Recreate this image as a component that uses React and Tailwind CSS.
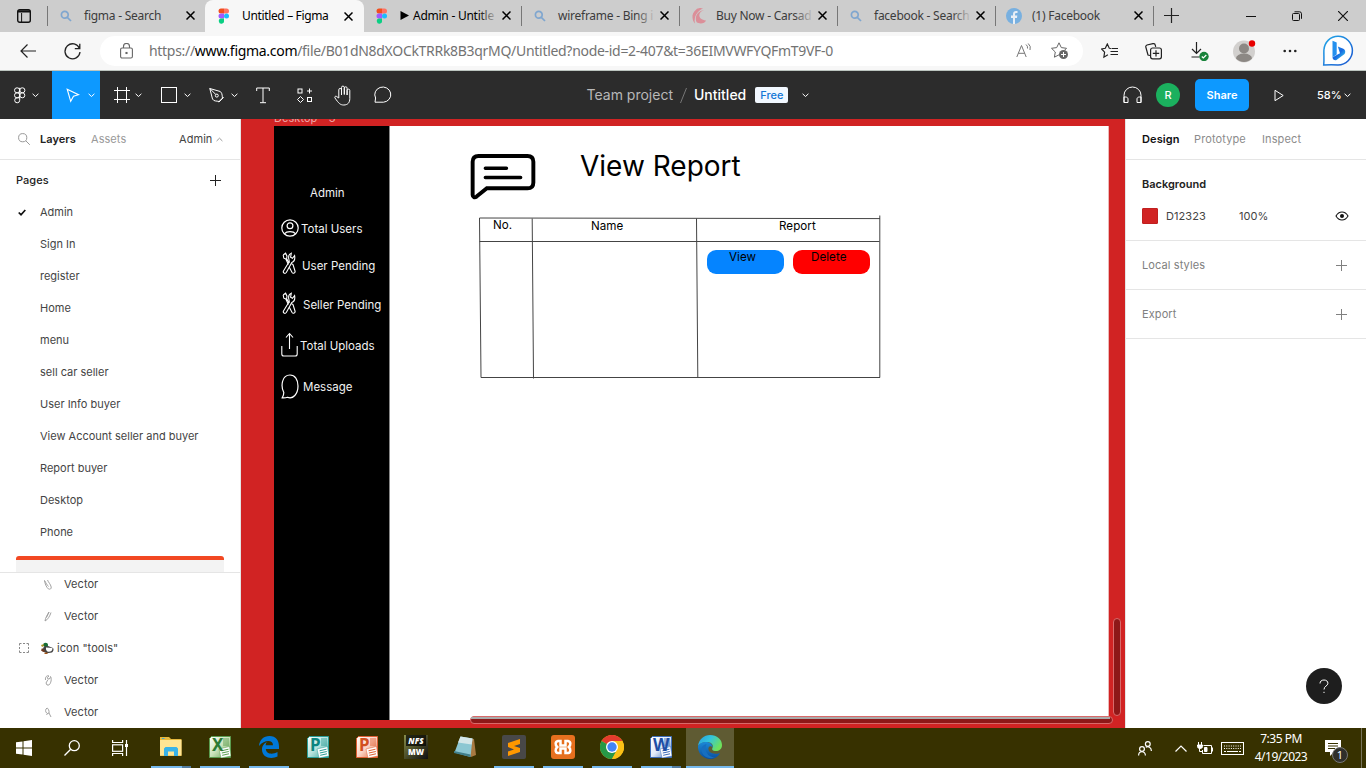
import React from "react";

const Svg = ({ w, h, vb, className = "", children, sw = 1, stroke = "currentColor", fill = "none" }) => (
  <svg width={w} height={h} viewBox={vb || `0 0 ${w} ${h}`} fill={fill} stroke={stroke} strokeWidth={sw} className={"block shrink-0 " + className}>
    {children}
  </svg>
);

const Close = () => (
  <Svg w={9} h={9} sw={1.5} className="text-black"><path d="M.5 .5l8 8M8.500 .5l-8 8" /></Svg>
);
const Magnifier = () => (
  <Svg w={12} h={12} sw={1.7} stroke="#7fa6cf"><circle cx="4.800" cy="4.800" r="3.400" /><path d="M7.300 7.300l3.700 3.700" /></Svg>
);
const FigmaLogo = () => (
  <Svg w={12} h={16} vb="0.500 0 11 16" stroke="none">
    <path d="M3 .5h3v5H3a2.500 2.500 0 010-5z" fill="#f24e1e" />
    <path d="M6 .5h2.500a2.500 2.500 0 010 5H6z" fill="#ff7262" />
    <path d="M3 5.500h3v5H3a2.500 2.500 0 010-5z" fill="#a259ff" />
    <circle cx="8.500" cy="8" r="2.500" fill="#1abcfe" />
    <path d="M3 10.500h3v2.300a2.600 2.600 0 11-3-2.300z" fill="#0acf83" />
  </Svg>
);
const Crescent = () => (
  <Svg w={15} h={16} stroke="none" fill="#db8f99"><path d="M11 .5A7.500 7.500 0 002.500 12C1.500 7 4 1.500 11 .5z" /><path d="M11 .5C5 .5 0 4 .5 9.500c.3 3 1 4.500 2.500 6C1.500 9 5 3 11 .5z" /><path d="M12 2C5 4.500 6 12 14 12.500c-1 3-6.500 4-9.500 1.500C2.500 9 5 3.500 12 2z" /></Svg>
);
const Facebook = () => (
  <Svg w={16} h={16} stroke="none"><circle cx="8" cy="8" r="8" fill="#78b0e0" /><path d="M7 16v-6H5V7.500h2V6c0-2 1.200-3 3-3l1.500.1v2h-1C9.400 5.100 9 5.500 9 6.300v1.200h2.300L11 10H9v6z" fill="#e8eef5" /></Svg>
);

const Tab = ({ icon, title, width, sep = true, fade = false }) => (
  <div className={`flex h-full items-center pl-3 ${width}`}>
    <div className="flex w-6 items-center">{icon}</div>
    <div className="relative w-[94px]">
      <div className="whitespace-nowrap text-[12px] leading-4 tracking-[-0.25px] text-[#3c3c3c]">{title}</div>
      {fade && <div className="absolute inset-y-0 -right-1 w-5 bg-linear-to-r from-[#cdcdcd]/0 to-[#cdcdcd]" />}
    </div>
    <div className="flex flex-1 justify-center pr-[3px]"><Close /></div>
    {sep && <div className="h-5 w-px bg-[#777]" />}
  </div>
);

const TabBar = () => (
  <div className="flex h-8 items-center bg-[#cdcdcd] pb-px font-['Noto_Sans','Open_Sans',sans-serif]">
    <div className="flex h-full w-12 items-center justify-end">
      <Svg w={14} h={14} stroke="#111" sw={1.4} className="mr-4"><rect x=".7" y=".7" width="12.600" height="12.600" rx="2" /><path d="M1 2.400h12" strokeWidth="2.200" /><path d="M4.600 4v9" strokeWidth="1" /></Svg>
      <div className="h-5 w-px bg-[#777]" />
    </div>
    <Tab icon={<Magnifier />} title="figma - Search" width="w-[157px]" sep={false} />
    <div className="flex h-8 w-[159px] items-center self-start rounded-t-lg bg-[#f7f7f7] pl-[13px]">
      <FigmaLogo />
      <span className="ml-3 w-[97px] whitespace-nowrap text-[12px] leading-4 tracking-[-0.35px] text-black">Untitled – Figma</span>
      <div className="ml-[5px]"><Close /></div>
    </div>
    <Tab icon={<FigmaLogo />} title={<span className="flex items-center text-black"><Svg w={9} h={9} fill="#000" stroke="none" className="mr-1"><path d="M.5 0L9 4.500.5 9z" /></Svg>Admin - Untitle</span>} width="w-[158px]" fade />
    <Tab icon={<Magnifier />} title="wireframe - Bing i" width="w-[158px]" fade />
    <Tab icon={<Crescent />} title="Buy Now - Carsad" width="w-[158px]" fade />
    <Tab icon={<Magnifier />} title="facebook - Search" width="w-[158px]" fade />
    <Tab icon={<div className="-ml-0.5"><Facebook /></div>} title="(1) Facebook" width="w-[158px]" />
    <Svg w={15} h={15} stroke="#222" sw={1.2} className="ml-[10px]"><path d="M7.500 0v15M0 7.500h15" /></Svg>
    <div className="ml-auto flex items-center text-[#111]">
      <Svg w={10} h={10} className="mr-9"><path d="M0 5.500h10" /></Svg>
      <Svg w={10} h={10} className="mr-9"><rect x=".5" y="2.500" width="7" height="7" rx="1" /><path d="M2.500 .8h5a2 2 0 012 2v5" /></Svg>
      <Svg w={10} h={10} sw={1.2} className="mr-[18px]"><path d="M0 0l10 10M10 0L0 10" /></Svg>
    </div>
  </div>
);

const AddressBar = () => (
  <div className="flex h-[39px] items-center border-b border-[#bcc5bf] bg-[#f7f7f7] font-['Noto_Sans','Open_Sans',sans-serif]">
    <Svg w={16} h={14} stroke="#222" sw={1.2} className="ml-5"><path d="M16 7H1M7.500 .5L1 7l6.500 6.500" /></Svg>
    <Svg w={17} h={17} stroke="#222" sw={1.3} className="ml-7"><path d="M15.500 5.500A7.500 7.500 0 1016 9M15.800 .8v4.900h-5" /></Svg>
    <div className="ml-[19px] flex h-[30px] w-[983px] items-center rounded-full bg-white">
      <Svg w={13} h={16} stroke="#666" sw={1.1} className="ml-5"><rect x=".6" y="5" width="11.800" height="10" rx="1.500" /><path d="M3.500 5V3.500a3 3 0 016 0V5" /><rect x="6" y="9.500" width="1" height="1" fill="#666" /></Svg>
      <span className="ml-4 w-[690px] whitespace-nowrap text-[14px] leading-5 tracking-[-0.3px] text-[#737373]">https://<span className="text-black">www.figma.com</span>/file/B01dN8dXOCkTRRk8B3qrMQ/Untitled?node-id=2-407&amp;t=36EIMVWFYQFmT9VF-0</span>
      <Svg w={16} h={16} stroke="#777" className="ml-auto"><path d="M.8 14L5.500 2.500 10.200 14M2.300 10.300h6.400M10 1.500a4 4 0 011.500 4M12.200 .5a6 6 0 011.800 6.500" /></Svg>
      <Svg w={18} h={18} stroke="#666" className="mr-[14px] ml-[19px]"><path d="M8 .8l2.300 4.800 5.200.7-2 2M8 .8L5.700 5.600l-5.200.7 3.800 3.700-.9 5.200L8 12.800" /><circle cx="12.500" cy="12.500" r="4.500" fill="#666" stroke="none" /><path d="M10 12.500h5M12.500 10v5" stroke="#fff" /></Svg>
    </div>
    <div className="flex flex-1 items-center text-[#222]">
      <Svg w={17} h={16} sw={1.2} className="ml-[18px]"><path d="M10.500 5.500l-2.200-.2L6.300 1 4.300 5.300.6 6l3 3.200-.7 5 4-2.400M11 5.500h6M9.500 8.500H17M9.500 11.500H17" /></Svg>
      <Svg w={17} h={17} sw={1.2} className="ml-[27px]"><path d="M5 12.500L3 12 .8 4C.5 3 1 2.500 2 2l6-1.300c1-.2 2 .2 2.200 1.200l.5 2" /><rect x="5.600" y="5" width="10.800" height="10.800" rx="2" /><path d="M7.800 10.400h6.400M11 7.200v6.400" /></Svg>
      <Svg w={18} h={20} sw={1.2} className="ml-[29px]"><path d="M5.500 1v11M1 8l4.500 4.500L10 8M.5 16h8" /><circle cx="13" cy="15.500" r="4.700" fill="#18833a" stroke="none" /><path d="M10.800 15.500l1.500 1.500 3-3" stroke="#fff" /></Svg>
      <Svg w={24} h={24} stroke="none" className="ml-[24px]"><circle cx="11" cy="12.500" r="11" fill="#d2d0ce" /><circle cx="11" cy="9.500" r="5" fill="#8c8884" /><path d="M3 19.500a8 5 0 0116 0 11 11 0 01-16 0z" fill="#8c8884" /><circle cx="19" cy="4.500" r="3.200" fill="#e80000" /></Svg>
      <Svg w={14} h={4} stroke="none" fill="#222" className="ml-[26px]"><circle cx="1.700" cy="2" r="1.300" /><circle cx="7" cy="2" r="1.300" /><circle cx="12.300" cy="2" r="1.300" /></Svg>
      <Svg w={32} h={32} stroke="none" className="ml-[25px]">
        <defs>
          <linearGradient id="bo" x1="0" y1="0" x2="1" y2="1"><stop offset="0" stopColor="#21a8e8" /><stop offset="1" stopColor="#1b56d0" /></linearGradient>
          <linearGradient id="bi" x1="0" y1="0" x2="1" y2="1"><stop offset="0" stopColor="#2a9df0" /><stop offset=".5" stopColor="#1668e0" /><stop offset="1" stopColor="#43e0f0" /></linearGradient>
        </defs>
        <path d="M16 1.200A14.200 14.200 0 1116 30c-5-.6-10-.4-14.300 0C2.300 25 1.700 20 1.900 15 2.500 7 8.500 1.200 16 1.200z" fill="#fff" stroke="url(#bo)" strokeWidth="1.500" />
        <path d="M10.500 5.800l4.200 1.800v12l-4.200 2.700z" fill="#2490ee" /><path d="M15.800 11.500l5.500 2.300c2.500 1.200 2.600 4.700.3 6L14.500 25c-1.800.8-4-.5-4-2.700l7.500-4z" fill="url(#bi)" />
      </Svg>
    </div>
  </div>
);

const Chev = ({ className = "" }) => (
  <Svg w={7} h={5} className={className}><path d="M.6 .8l2.900 2.700L6.400 .8" /></Svg>
);

const Toolbar = () => (
  <div className="grid h-12 grid-cols-[1fr_auto_1fr] items-center bg-[#2c2c2c] font-['Inter',sans-serif] text-white">
    <div className="flex h-full items-center">
      <Svg w={12} h={17} className="ml-[14px]"><rect x=".5" y=".8" width="5.200" height="5" rx="2.500" /><rect x="5.700" y=".8" width="5.200" height="5" rx="2.500" /><rect x=".5" y="5.800" width="5.200" height="5" rx="2.500" /><circle cx="8.300" cy="8.300" r="2.500" /><path d="M5.700 .8v12.500a2.500 2.500 0 11-2.600-2.500h2.600" /></Svg>
      <Chev className="ml-[6px]" />
      <div className="ml-[13px] flex h-full w-12 items-center bg-[#0d99ff]">
        <Svg w={14} h={15} sw={1.1} className="ml-[14px]"><path d="M1.200 1.200l11.300 5.500-5 1.600-2.800 5z" /></Svg>
        <Chev className="ml-[8px]" />
      </div>
      <Svg w={16} h={16} className="ml-[14px]"><path d="M3.500 0v16M12.500 0v16M0 3.500h16M0 12.500h16" /></Svg>
      <Chev className="ml-[5px]" />
      <Svg w={16} h={16} className="ml-[19px]"><rect x=".5" y=".5" width="15" height="15" /></Svg>
      <Chev className="ml-[7px]" />
      <Svg w={16} h={17} className="ml-[18px]"><path d="M.8 1.500l10.500 3c2.500 2 1.700 5.500 2.200 6.500l-3.500 3.500c-2.500-.8-5 .2-6.500-2.500zM.8 1.500l6 6M9.800 15.200l4.900-4.900" /><circle cx="7.800" cy="8.600" r="1.500" /></Svg>
      <Chev className="ml-[6px]" />
      <Svg w={14} h={17} className="ml-[18px]"><path d="M.7 4V1h12.600v3M7 1v14.500M4 15.700h6" /></Svg>
      <Svg w={15} h={15} className="ml-[27px]"><rect x="1" y="1" width="4" height="4" /><path d="M12.500 .5v5M10 3h5M3.500 8.500l3 3-3 3-3-3z" /><rect x="10.500" y="9.500" width="4" height="4" /></Svg>
      <Svg w={19} h={21} className="ml-[22px]"><path d="M4.800 13V4.800a1.300 1.300 0 012.700 0V10 2.500a1.400 1.400 0 012.800 0V9.500 3.200a1.400 1.400 0 012.800 0V10 5.500a1.300 1.300 0 012.700 0v8c0 4-2 6.500-6 6.500-3.500 0-5-1.500-8.800-7-.8-1.300.8-2.500 2-1.200z" /></Svg>
      <Svg w={18} h={18} className="ml-[21px]"><path d="M1 16.200l.6-4.200A8 7.600 0 119.500 16.200z" /></Svg>
    </div>
    <div className="flex items-center pl-[30px] text-[14px] leading-5">
      <span className="text-[#b8b8b8]">Team project</span>
      <Svg w={7} h={15} stroke="#777" className="mx-[7px]"><path d="M6.500 0l-6 15" /></Svg>
      <span className="font-medium">Untitled</span>
      <span className="ml-[9px] flex h-4 items-center rounded-[2px] bg-[#f2f8ff] px-[5px] text-[11px] font-medium leading-4 text-[#1277d6]">Free</span>
      <Chev className="ml-[14px]" />
    </div>
    <div className="flex items-center justify-end">
      <Svg w={19} h={18} className=""><path d="M1 16.500V9.300a8.500 8.300 0 0117 0v7.200M1 16.500V11h1.500c1.500 0 2.500.8 2.500 2v3.500zM18 16.500V11h-1.500c-1.500 0-2.500.8-2.500 2v3.500z" /></Svg>
      <div className="ml-[14px] flex size-6 items-center justify-center rounded-full bg-[#1bb05e] text-[11px] font-medium">R</div>
      <div className="ml-[15px] flex h-8 w-[54px] items-center justify-center rounded-[5px] bg-[#0d99ff] text-[11px] font-semibold">Share</div>
      <Svg w={10} h={13} className="ml-[25px]"><path d="M1 1.300l8.200 5.200L1 11.700z" /></Svg>
      <span className="ml-[33px] w-[23px] text-[11px] font-medium">58%</span>
      <Chev className="mr-[15px] ml-[4px]" />
    </div>
  </div>
);

const Plus = () => <Svg w={11} h={11}><path d="M5.500 0v11M0 5.500h11" /></Svg>;

const pages = ["Admin", "Sign In", "register", "Home", "menu", "sell car seller", "User Info buyer", "View Account seller and buyer", "Report buyer", "Desktop", "Phone"];

const VectorRow = ({ d, first }) => (
  <div className={`flex h-8 shrink-0 items-center pl-[44px] ${first ? "-mt-[5px]" : ""}`}>
    <Svg w={8} h={11} stroke="#999" sw={0.9}><path d={d} /></Svg>
    <span className="ml-3">Vector</span>
  </div>
);

const LeftPanel = () => (
  <aside className="flex w-[241px] shrink-0 flex-col border-r border-[#e5e5e5] bg-white text-[#444]">
    <div className="flex h-[41px] items-center border-b border-[#e5e5e5] pl-[18px]">
      <Svg w={12} h={12} stroke="#999"><circle cx="4.700" cy="4.700" r="4.100" /><path d="M7.800 7.800l4 4" /></Svg>
      <span className="ml-[10px] w-[51px] font-semibold text-[#222]">Layers</span>
      <span className="text-[#999]">Assets</span>
      <span className="ml-auto w-[37px]">Admin</span>
      <Svg w={7} h={5} stroke="#999" className="mr-[17px]"><path d="M.6 4l2.900-2.800L6.400 4" /></Svg>
    </div>
    <div className="mt-1 flex h-8 items-center justify-between pr-[19px] pl-4 font-medium text-[#222]">Pages<Plus /></div>
    {pages.map((p, i) => (
      <div key={p} className="flex h-8 shrink-0 items-center tracking-[0px]">
        <div className="w-10 pl-[18px]">{i === 0 && <Svg w={8} h={7} stroke="#111" sw={1.7}><path d="M.7 3.500L3 5.700 7.300 1" /></Svg>}</div>
        {p}
      </div>
    ))}
    <div className="mx-4 mt-2 h-4 shrink-0 rounded-t-[3px] border-t-4 border-[#f24822] bg-[#f3f3f3]" />
    <div className="flex min-h-0 flex-1 flex-col overflow-hidden border-t border-[#e5e5e5]">
      <VectorRow first d="M.5 1.500c.5 3 1.500 6.500 4 8.500 1.500.5 3 0 2.700-2C6.500 5 4.500 3.500 3.500 1M.5 1.500C2 4 3 6 4.500 7.500" />
      <VectorRow d="M5 1C3.500 4 1.500 6 1 10c2.500-1 5-5 6-8.500M5 1L2.500 6.500" />
      <div className="flex h-8 shrink-0 items-center pl-[19px]">
        <Svg w={10} h={10} stroke="#888"><path d="M.5 2.500v-2h2M7.500 .5h2v2M9.500 7.500v2h-2M2.500 9.500h-2v-2M4 .5h2M4 9.500h2M.5 4v2M9.500 4v2" /></Svg>
        <Svg w={13} h={12} stroke="none" className="mr-[3px] ml-3"><path d="M0 3l3-1v2L1 5z" fill="#a89022" /><path d="M2.500 1.500C4 0 7 .5 7 3S5 5.500 3 4.500z" fill="#176d35" /><path d="M3 4.500l4-.5 5 2c1 1 .5 3.500-1 4.500l-5 .8-5-2.300z" fill="#444" /><path d="M5 5.500l6.500.5c0 3-2 4-4 3.800C6 9.800 4.500 8 5 5.500z" fill="#fff" /><path d="M1 6l3 3-1.500 1L0 8.500z" fill="#703b20" /><path d="M3.500 10.500h3V12h-3z" fill="#a05517" /></Svg>
        <span>icon "tools"</span>
      </div>
      <VectorRow d="M1.500 5C1 2 3 0 5 1c-2 1.500-2 2-1 3l2-.5C6.500 2 6.500 1.500 6.500 1.500c1.500 2 .5 7-1.500 8.500H3L2 8l2-3.500" />
      <VectorRow d="M2 2c-1 2 0 4 1.500 4.500L5 6C5.500 4 4 1 3 1zM3.500 6.500L2.500 8M5 6l2 4" />
    </div>
  </aside>
);

const RightPanel = () => (
  <aside className="flex w-[241px] shrink-0 flex-col border-l border-[#e5e5e5] bg-white text-[#444]">
    <div className="flex h-[41px] items-center border-b border-[#e5e5e5] pl-4 tracking-[0.12px] text-[#8c8c8c]">
      <span className="w-[52px] font-semibold text-[#111]">Design</span>
      <span className="w-[68px]">Prototype</span>
      <span>Inspect</span>
    </div>
    <div className="flex h-[81px] flex-col border-b border-[#e5e5e5] pt-2">
      <div className="flex h-8 items-center pl-4 font-semibold tracking-[0px] text-[#222]">Background</div>
      <div className="flex h-8 items-center pr-[17px] pl-4">
        <div className="size-4 rounded-[1px] border border-[#c02020] bg-[#d12323]" />
        <span className="ml-2 w-[73px]">D12323</span>
        <span>100%</span>
        <Svg w={14} h={10} stroke="#111" sw={1.1} className="ml-auto"><path d="M1 5c1.500-2.700 3.500-4 6-4s4.500 1.300 6 4c-1.500 2.700-3.500 4-6 4S2.500 7.700 1 5z" /><circle cx="7" cy="5" r="2" fill="#111" stroke="none" /></Svg>
      </div>
    </div>
    {["Local styles", "Export"].map((t) => (
      <div key={t} className="flex h-[49px] items-center justify-between border-b border-[#e5e5e5] pr-[19px] pl-4 tracking-[0.1px] text-[#808080]">{t}<Plus /></div>
    ))}
    <div className="mt-auto mr-6 mb-6 flex size-9 items-center justify-center self-end rounded-full bg-[#1e1e1e] text-white">
      <Svg w={10} h={15} className=""><path d="M1 4.500C1 2.300 2.500 1 5 1s3.900 1.400 3.900 3.300C8.900 7 5 7 5 10.500" /><path d="M5 12.800v1.200" /></Svg>
    </div>
  </aside>
);

const Tools = ({ className }) => (
  <Svg w={14} h={23} stroke="#fff" sw={1.1} className={"absolute " + className}>
    <path d="M1.200 3L3.600 1.200 5 4.200 4.600 6.800 7.400 11M1.200 3l.6 3.200 2 .8 2.600 5.500" />
    <path d="M9.300 1.200C7 2 6.300 4.500 6.800 7l.5 2.500L1.500 19c-.8 2 1.500 3.200 2.800 1.500L9.800 10.500c2.200-.8 3.400-3.500 2.800-7L10.500 6.300 8.600 5.200z" />
    <path d="M9.300 11.500l1.700 1L13 19c.6 2-1.900 3-2.900 1.500L7.300 15.300" />
  </Svg>
);

const Canvas = () => (
  <main className="relative min-w-0 flex-1 overflow-hidden bg-[#d12323]">
    <div className="absolute top-[-9px] left-[33px] text-[11px] leading-4 whitespace-nowrap text-[#eda6a6]">Desktop - 3</div>
    <div className="absolute top-[7px] left-[33px] h-[594px] w-[835px] border-r border-[#ecb9b9] bg-white">
      <div className="absolute top-0 left-0 box-content h-[594px] w-[115px] border-r border-[#888] bg-black text-[11.500px] leading-4 tracking-[0px] whitespace-nowrap text-[#f2f2f2]">
        <span className="absolute top-[59px] left-[36px]">Admin</span>
        <span className="absolute top-[95px] left-[27px]">Total Users</span>
        <span className="absolute top-[132px] left-[28px]">User Pending</span>
        <span className="absolute top-[171px] left-[29px]">Seller Pending</span>
        <span className="absolute top-[212px] left-[26px]">Total Uploads</span>
        <span className="absolute top-[253px] left-[29px]">Message</span>
        <Svg w={18} h={18} stroke="#fff" sw={1.200} className="absolute top-[93px] left-[7px]"><circle cx="9" cy="9" r="8.200" /><circle cx="9" cy="6.700" r="2.900" /><path d="M3.300 14.800c2.500-3 9-3 11.400 0" /></Svg>
        <Tools className="top-[126px] left-[8px]" />
        <Tools className="top-[166px] left-[8px]" />
        <Svg w={17} h={25} stroke="#fff" sw={1.100} className="absolute top-[206px] left-[7px]"><path d="M8.500 17V1.500M5 5.500l3.500-4 3.500 4M.8 14v8c0 1.500.7 2 2 2h11.400c1.300 0 2-.5 2-2v-8" /></Svg>
        <Svg w={18} h={25} stroke="#fff" sw={1.200} className="absolute top-[248px] left-[7px]"><path d="M2.800 18.500C-.5 12 .8 1 9 1c5 0 8 4.500 8 11 0 8-5 13.500-10.500 11.300-1.500.5-3.500.6-5.300.5 1-1.500 1.600-3 1.600-5.300z" /></Svg>
      </div>
      <Svg w={66} h={47} vb="0 0 67 48" stroke="#000" sw={4} className="absolute top-[27px] left-[196px]"><path d="M2.500 9c0-4 2-6 6-6h50c4 0 6 2 6 6v21c0 4-2 6-6 6H17L6.500 44.500c-2 1.500-4 .5-4-1.500z" /><path d="M15.500 15.500H37M15.500 25H51.500" strokeLinecap="round" strokeWidth="3.600" /></Svg>
      <span className="absolute top-[20px] left-[306px] text-[28px] leading-10 tracking-[0px] whitespace-nowrap text-black">View Report</span>
      <Svg w={403} h={166} stroke="#444" className="absolute top-[88px] left-[204px]">
        <path d="M1.500 4L402 4.600M1.500 27.500h400M3 163.500h399" /><path d="M1.500 4l1.500 159.500M54.200 4.500l1.300 160M218.500 4.500l1.300 159M401.800 1.500v162" />
      </Svg>
      <div className="text-[11.600px] leading-4 whitespace-nowrap text-black">
        <span className="absolute top-[91px] left-[219px]">No.</span>
        <span className="absolute top-[92px] left-[317px]">Name</span>
        <span className="absolute top-[92px] left-[505px]">Report</span>
        <div className="absolute top-[124px] left-[433px] h-[24px] w-[77px] rounded-[9px] bg-[#0584ff] pl-[22px] leading-[15px]">View</div>
        <div className="absolute top-[124px] left-[519px] h-[24px] w-[77px] rounded-[9px] bg-[#ff0000] pl-[18px] leading-[15px]">Delete</div>
      </div>
    </div>
    <div className="absolute top-[597px] left-[229px] h-[8px] w-[643px] rounded-full border border-[#d96a6a] bg-[#8e1818]">
      <div className="mr-[2px] h-[2px] bg-[#aaa]" />
    </div>
    <div className="absolute top-[499px] left-[872px] h-[98px] w-[8px] rounded-full border border-[#d96a6a] bg-[#8e1818]" />
  </main>
);

const OfficeIcon = ({ id, light, mid, dark, letter }) => (
  <div className="relative size-[22px] overflow-hidden">
    <Svg w={22} h={22} stroke="none">
      <defs><linearGradient id={id} x1="0" y1="0" x2="1" y2="1"><stop offset="0" stopColor="#fff" /><stop offset=".5" stopColor={light} /><stop offset="1" stopColor={mid} /></linearGradient></defs>
      <path d="M2.500 .5h19v21H.5v-19z" fill={`url(#${id})`} stroke={mid} />
      <path d="M14 2h6v8h-6z" fill={mid} opacity=".45" />
      <path d="M10 13l10.500-2.500L22 20l-10 2z" fill="#fff" stroke={mid} strokeWidth=".5" />
      <path d="M12.500 14.800l7-1.600M12.800 17l7-1.500M13.200 19.300l6.800-1.500" stroke={mid} />
    </Svg>
    <span className="absolute -top-px left-[3px] text-[17px] leading-5 font-bold" style={{ color: dark }}>{letter}</span>
  </div>
);

const apps = [
  { line: true, split: true, icon: <Svg w={22} h={20} stroke="none"><path d="M0 2V0h9l2 2h10.500v17H0z" fill="#e6b93e" /><path d="M0 3h21.500v15.500H0z" fill="#ffe594" /><path d="M4 19v-7.500l1.500-1.500h11l1.500 1.500V19h-4v-4.500H8V19z" fill="#39b3e8" /><path d="M2 1.500h2.500" stroke="#43aadd" /></Svg> },
  { line: true, icon: <OfficeIcon id="ox" light="#c9e2b9" mid="#5a9c4e" dark="#2c7a35" letter="X" /> },
  { line: true, icon: <Svg w={20} h={22} stroke="none" fill="#0078d7"><path d="M0 10C.5 4 4.500 0 10.500 0 17 0 20 4.500 20 10.500V13H6.800c.2 5 6.500 6 11.700 3v4.500c-6 3-15.500 1.500-15.500-7 0-4 2.500-6.500 5-7.500-1 1-1.300 2-1.300 3.300H14c0-6-9-5.500-14 .7z" /></Svg> },
  { icon: <OfficeIcon id="op" light="#b5e2dc" mid="#2a9d96" dark="#0c8580" letter="P" /> },
  { icon: <OfficeIcon id="oq" light="#fbd3c4" mid="#df5f33" dark="#d2501f" letter="P" /> },
  { icon: <div className="flex size-6 flex-col overflow-hidden bg-linear-to-br from-[#8a8f4c] via-[#4a4c28] to-[#111] text-center text-[8px] font-black text-white"><span className="mx-[2px] h-[11px] bg-black/70 leading-[11px] italic">NFS</span><span className="h-[11px] leading-[11px]">MW</span></div> },
  { icon: <Svg w={24} h={24} stroke="none"><path d="M7 2l14 2 2 16-5 2z" fill="#a87a42" /><path d="M7.500 1.500l12 2L17.500 22l-16-4.500z" fill="#8cc7d2" /><path d="M7.500 1.500l12 2-.8 6L5 7.500z" fill="#d4e6e8" /><path d="M1 16l16.500 3.500V22L1 18z" fill="#417f8b" /></Svg> },
  { line: true, icon: <Svg w={24} h={24} stroke="none"><rect width="24" height="24" rx="2" fill="#484848" /><path d="M6 8l12-4v5l-6 2 6 2v4L6 21v-4.500l6-2L6 12z" fill="#ff9800" /></Svg> },
  { line: true, icon: <Svg w={24} h={24} stroke="none"><rect width="24" height="24" rx="3" fill="#e6701e" /><path d="M7 6h2.500v4.500h5V6H17c3 .5 3 4 .8 6 2.200 2 2.200 5.500-.8 6h-2.500v-4.500h-5V18H7c-3-.5-3-4-.8-6C4 10 4 6.500 7 6z" fill="none" stroke="#fff" strokeWidth="2.500" /></Svg> },
  { line: true, icon: <Svg w={24} h={24} stroke="none"><circle cx="12" cy="12" r="12" fill="#fbc116" /><path d="M12 12L1.600 6a12 12 0 0120.800 0z" fill="#e33b2e" /><path d="M1.600 6A12 12 0 0012 24l5-9-5-3z" fill="#279847" /><path d="M22.400 6H12v6l5 3-5 9A12 12 0 0022.400 6z" fill="#fbc116" /><circle cx="12" cy="12" r="6" fill="#fff" /><circle cx="12" cy="12" r="4.700" fill="#4285f4" /></Svg> },
  { line: true, split: true, icon: <OfficeIcon id="ow" light="#e2ecfa" mid="#3c6cb8" dark="#1d4ea5" letter="W" /> },
];

const EdgeLogo = () => (
  <Svg w={24} h={24} stroke="none">
    <defs>
      <linearGradient id="e1" x1="0" y1="0" x2="1" y2=".5"><stop offset="0" stopColor="#289be0" /><stop offset=".5" stopColor="#33c5dc" /><stop offset="1" stopColor="#6ee15b" /></linearGradient>
      <linearGradient id="e2" x1="0" y1="0" x2="0" y2="1"><stop offset="0" stopColor="#1b8ad8" /><stop offset="1" stopColor="#0b4f9e" /></linearGradient>
    </defs>
    <path d="M0 11C1 4 6 0 12 0c7 0 12 4.500 12 10 0 4-3 6-6 6-3.500 0-4.500-1.500-3.500-3C16 9 12 7 9 7 5 7 2 8.500 0 11z" fill="url(#e1)" />
    <path d="M0 11C2 7.500 5.500 6.500 9 7c3.500.3 6 3 5.500 5.500-1-1.700-3.500-1.500-4 .5-.8 4 4 7.500 11.500 5C20 22 16 24 12 24 5 24-.5 18.500 0 11z" fill="url(#e2)" />
    <path d="M8.500 9c-3 7 2 13.500 9 13.500-7 2.500-14-1.500-14-8C3.500 11.500 6 9.500 8.500 9z" fill="#176fc0" />
  </Svg>
);

const Taskbar = () => (
  <footer className="flex h-10 items-stretch bg-[#373100] font-['Noto_Sans','Open_Sans',sans-serif] text-white">
    <div className="flex w-12 items-center justify-center"><Svg w={16} h={16} stroke="none" fill="#fff"><path d="M0 2.300L6.500 1.400v6.100H0zM7.500 1.200L16 0v7.500H7.500zM0 8.500h6.500v6.100L0 13.700zM7.500 8.500H16V16l-8.500-1.200z" /></Svg></div>
    <div className="flex w-12 items-center justify-center"><Svg w={16} h={16} sw={1.3}><circle cx="10.300" cy="5.700" r="5" /><path d="M6.700 9.300L.5 15.500" /></Svg></div>
    <div className="mr-[3px] flex w-12 items-center justify-center"><Svg w={16} h={16} sw={1.2}><path d="M.6 0v2.500h10V0M.6 16v-2.500h10V16M14.500 0v16" /><rect x=".6" y="4.800" width="10" height="6.500" /><rect x="13" y="4" width="3" height="3" fill="#fff" stroke="none" /></Svg></div>
    {apps.map((a, i) => (
      <div key={i} className="flex w-[49px] flex-col pr-px">
        <div className="flex h-[38px] items-center justify-center">{a.icon}</div>
        {a.line && <div className="mr-1 ml-1 flex h-[2px] bg-[#76b9ed]">{a.split && <div className="ml-auto w-[9px] bg-[#527ca0]" />}</div>}
      </div>
    ))}
    <div className="flex w-12 flex-col bg-[#5f5b33]">
      <div className="flex h-[38px] items-center justify-center"><EdgeLogo /></div>
      <div className="h-[2px] bg-[#76b9ed]" />
    </div>
    <div className="ml-auto flex items-center">
      <Svg w={14} h={15} sw={1.2} className="mr-[23px]"><circle cx="9.800" cy="3" r="2.400" /><circle cx="4" cy="8" r="2.400" /><path d="M.6 14.500c0-5 6.800-5 6.800 0M7.800 6.300c2.500-1.500 5.600 0 5.600 3.700" /></Svg>
      <Svg w={12} h={7} sw={1.2}><path d="M.5 6.500L6 1l5.500 5.500" /></Svg>
      <Svg w={17} h={12} className="ml-[10px]"><path d="M6.500 3.500h8v8h-9v-3.500M15.500 5.500v4M2.500 6v3.500h3M1.500 0v3M4.500 0v3" /><path d="M.5 3h5v1.500a2.500 2 0 01-5 0zM7.500 5.500h2.500v4H7.500z" fill="#fff" /></Svg>
      <Svg w={23} h={13} className="ml-[7px]"><rect x=".5" y=".5" width="22" height="12" /><path d="M3 4h17M3 6.500h17" strokeDasharray="1 1.300" /><path d="M3 9.500h2M6 9.500h11M18 9.500h2" /></Svg>
      <div className="ml-[10px] flex w-[54px] flex-col items-center text-[12px] leading-[18px] tracking-[-0.5px] whitespace-nowrap"><span>7:35 PM</span><span>4/19/2023</span></div>
      <div className="relative ml-[17px]">
        <Svg w={17} h={17} stroke="none"><path d="M0 0h16v12H9l-4 4v-4H0z" fill="#fff" /><path d="M3 3.500h10M3 6h10M3 8.500h7" stroke="#373100" /></Svg>
        <div className="absolute top-[7px] left-[7px] flex size-4 items-center justify-center rounded-full border border-[#777] bg-[#2f2f2a] text-[11px] leading-none">1</div>
      </div>
      <div className="ml-[19px] h-10 w-px bg-[#77735a]" />
      <div className="w-1" />
    </div>
  </footer>
);

export default function App() {
  return (
    <div className="flex h-[768px] w-[1366px] flex-col overflow-hidden">
      <TabBar />
      <AddressBar />
      <Toolbar />
      <div className="flex min-h-0 flex-1 font-['Inter',sans-serif] text-[11px] leading-4 tracking-[0.055px]">
        <LeftPanel />
        <Canvas />
        <RightPanel />
      </div>
      <Taskbar />
    </div>
  );
}
